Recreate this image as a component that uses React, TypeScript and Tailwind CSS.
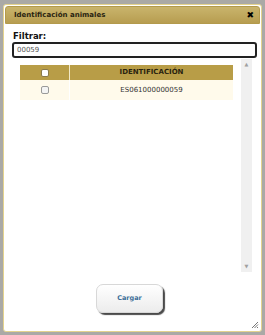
import { useState } from "react";

const FONT = { fontFamily: '"DejaVu Sans", Verdana, sans-serif' };

function Box({ dim = false }: { dim?: boolean }) {
  return (
    <span
      className={`inline-block h-[8px] w-[8px] rounded-[2px] border ${
        dim ? "border-[#9a9a9a] bg-[#f4f4f4]" : "border-[#8a7a4a] bg-white"
      }`}
    />
  );
}

export default function App() {
  const [filter, setFilter] = useState("00059");

  return (
    <div className="h-[335px] w-[265px] bg-[#aaa9a6] pl-[3px] pt-[4px]" style={FONT}>
      <div className="relative flex h-[328px] w-[259px] flex-col rounded-[3px] border border-[#e4d38e] bg-white p-px">
        <div className="flex h-[18px] items-center justify-between rounded-t-[3px] border border-[#b39a4c] bg-gradient-to-b from-[#c9b46c] to-[#b79d50] pl-[8px] pr-[5px]">
          <span className="text-[7px] font-bold text-[#2a2410]">Identificación animales</span>
          <span className="text-[9px] font-bold leading-none text-black">✖</span>
        </div>

        <div className="px-[8px] pt-[7px]">
          <div className="text-[8.5px] font-bold leading-[10px] text-[#111]">Filtrar:</div>
          <input
            value={filter}
            onChange={(e) => setFilter(e.target.value)}
            className="-ml-px mt-px block h-[16px] w-[245px] rounded-[3px] border-2 border-[#222] px-[3px] text-[7px] text-[#555] outline-none"
          />
        </div>

        <div className="mt-px flex h-[213px] pl-[7px]">
          <div className="flex-1 px-[8px] pt-[6px]">
            <div className="flex h-[15px] bg-[#b89d47]">
              <div className="flex w-[49px] items-center justify-center">
                <Box />
              </div>
              <div className="w-px bg-[#f2e9c8]" />
              <div className="flex flex-1 items-center justify-center text-[7px] font-bold text-[#2a2410]">
                IDENTIFICACIÓN
              </div>
            </div>
            <div className="flex h-[20px] bg-[#fffaeb]">
              <div className="flex w-[49px] items-center justify-center">
                <Box dim />
              </div>
              <div className="w-px bg-white" />
              <div className="flex flex-1 items-center justify-center text-[7px] text-[#333]">
                ES061000000059
              </div>
            </div>
          </div>
          <div className="flex w-[11px] flex-col items-center justify-between bg-[#f0f0f0] py-[3px]">
            <span className="text-[5px] leading-none text-[#a0a0a0]">▲</span>
            <span className="text-[5px] leading-none text-[#a0a0a0]">▼</span>
          </div>
          <div className="w-[8px]" />
        </div>

        <div className="mt-[12px] flex justify-center pr-[6px]">
          <button className="h-[29px] w-[67px] rounded-[7px] border border-[#d8d8d8] bg-gradient-to-b from-white to-[#ececec] text-[6.5px] font-bold text-[#3b6e98] shadow-[2px_2px_1px_#4a4a4a]">
            Cargar
          </button>
        </div>

        <svg className="absolute bottom-[2px] right-[2px]" width="8" height="8" viewBox="0 0 8 8">
          <path d="M7 1L1 7M7 3.5L3.5 7M7 6L6 7" stroke="#666" strokeWidth="0.9" />
        </svg>
      </div>
    </div>
  );
}
